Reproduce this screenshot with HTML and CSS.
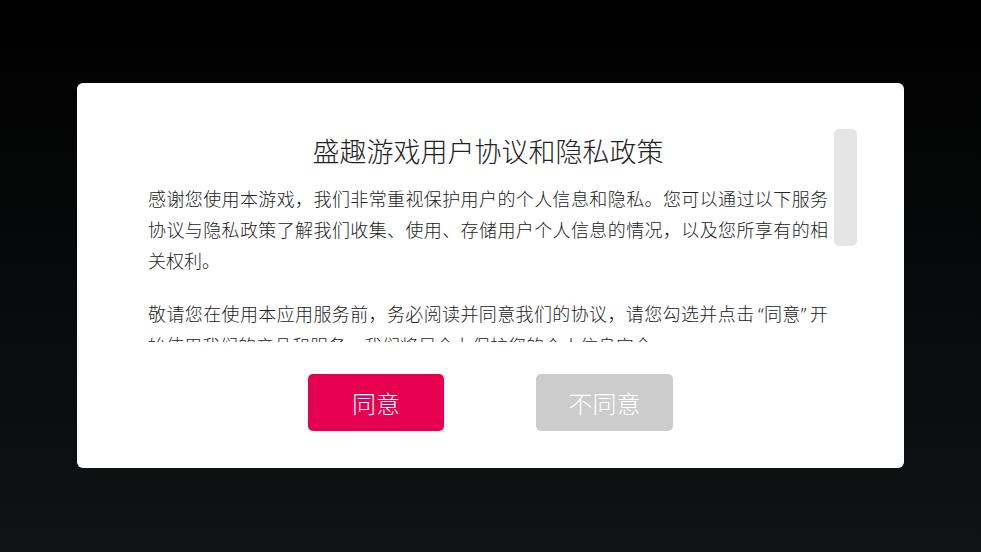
FILE: index.html
```html
<!DOCTYPE html>
<html lang="zh-CN">
<head>
<meta charset="utf-8">
<title>盛趣游戏用户协议和隐私政策</title>
<link rel="stylesheet" href="styles.css">
</head>
<body>
<div class="screen">
  <div class="dialog">
    <div class="body">
      <div class="scroll">
        <h1 class="title">盛趣游戏用户协议和隐私政策</h1>
        <p class="para">感谢您使用本游戏，我们非常重视保护用户的个人信息和隐私。您可以通过以下服务协议与隐私政策了解我们收集、使用、存储用户个人信息的情况，以及您所享有的相关权利。</p>
        <p class="para">敬请您在使用本应用服务前，务必阅读并同意我们的协议，请您勾选并点击<span class="q q-open">“</span>同意<span class="q q-close">”</span>开始使用我们的产品和服务，我们将尽全力保护您的个人信息安全。</p>
      </div>
      <div class="track"><div class="thumb"></div></div>
    </div>
    <div class="actions">
      <button class="btn agree">同意</button>
      <button class="btn disagree">不同意</button>
    </div>
  </div>
</div>
</body>
</html>
```
FILE: styles.css
```css
html, body {
  margin: 0;
  padding: 0;
  height: 100%;
}
body {
  font-family: "Noto Sans CJK SC", "Noto Sans", sans-serif;
  background: linear-gradient(to bottom, #000000 0%, #08090a 50%, #101215 100%);
}
.screen {
  height: 552px;
  display: flex;
  align-items: flex-start;
  justify-content: center;
  padding-top: 83px;
  box-sizing: border-box;
}
.dialog {
  width: 827px;
  height: 385px;
  background: #ffffff;
  border-radius: 6px;
  box-sizing: border-box;
  padding: 46px 47px 0 71px;
  display: flex;
  flex-direction: column;
}
.body {
  display: flex;
  gap: 6px;
  height: 213px;
}
.scroll {
  width: 681px;
  height: 213px;
  overflow: hidden;
}
.track {
  width: 23px;
  height: 213px;
}
.thumb {
  height: 117px;
  background: #e5e5e5;
  border-radius: 5px;
}
.title {
  margin: 0;
  padding-top: 3px;
  font-size: 27px;
  font-weight: 300;
  line-height: 38px;
  color: #222222;
  text-align: center;
}
.para {
  margin: 0;
  font-size: 18px;
  font-weight: 300;
  line-height: 31px;
  color: #222222;
  text-align: justify;
  text-autospace: no-autospace;
  text-spacing-trim: space-all;
}
.q {
  display: inline-block;
  width: 9px;
  font-family: "Noto Sans", "Liberation Sans", sans-serif;
  white-space: nowrap;
}
.q-open {
  text-align: right;
}
.q-close {
  text-align: left;
}
.title + .para {
  margin-top: 13px;
}
.para + .para {
  margin-top: 22px;
}
.actions {
  margin-top: 32px;
  display: flex;
  justify-content: center;
  gap: 92px;
  margin-left: -24px;
}
.btn {
  width: 136px;
  height: 57px;
  border: none;
  border-radius: 5px;
  font-family: "Noto Sans CJK SC", "Noto Sans", sans-serif;
  font-size: 24px;
  font-weight: 300;
  line-height: 57px;
  color: #ffffff;
  padding: 0;
}
.agree {
  background: #e6004f;
}
.disagree {
  background: #cccccc;
  width: 137px;
}
```
